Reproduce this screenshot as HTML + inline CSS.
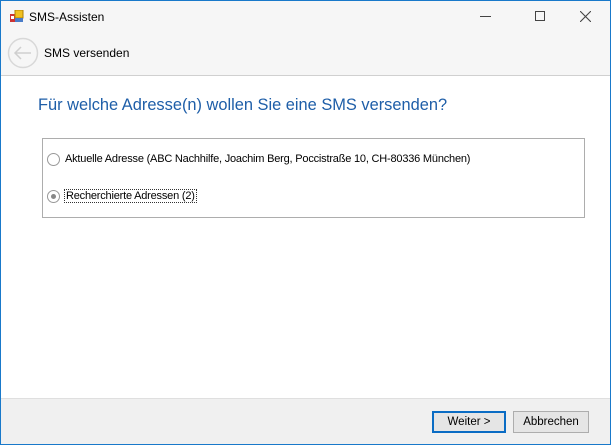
<!DOCTYPE html>
<html><head><style>
*{margin:0;padding:0;box-sizing:border-box}
body{width:611px;height:445px;overflow:hidden;font-family:"Liberation Sans",sans-serif;font-size:11px;color:#000;background:#fff;position:relative}
.win{position:absolute;left:0;top:0;width:611px;height:445px;border:1px solid #1979ca;}
.top{position:absolute;left:0;top:0;width:609px;height:75px;background:#f6f6f6;border-bottom:1px solid #d0d0d0}
.foot{position:absolute;left:0;top:397px;width:609px;height:46px;background:#f0f0f0;border-top:1px solid #dfdfdf}
.abs{position:absolute;white-space:nowrap}
.btn{position:absolute;height:22px;background:#e5e5e5;border:1px solid #adadad;text-align:center;line-height:20px;font-size:11.5px}
.radio{position:absolute;width:13px;height:13px;border:1px solid #999;border-radius:50%;background:#fff}
</style></head><body>
<div class="win">
<div class="top"></div>
<svg class="abs" style="left:9px;top:9px" width="14" height="13"><rect x="0" y="4" width="5" height="8" fill="#c33"/><rect x="1" y="6" width="3" height="3" fill="#fff"/><rect x="5" y="0" width="8" height="8" fill="#f0c020" stroke="#b08000"/><rect x="5" y="8" width="8" height="4" fill="#4a7cc8"/></svg>
<div class="abs" style="left:28px;top:9px;font-size:12px">SMS-Assisten</div>
<div class="abs" style="left:479px;top:15px;width:11px;height:1px;background:#444"></div>
<div class="abs" style="left:534px;top:10px;width:10px;height:10px;border:1px solid #444"></div>
<svg class="abs" style="left:579px;top:10px" width="11" height="11"><path d="M0 0L11 11M11 0L0 11" stroke="#444" stroke-width="1.1"/></svg>
<svg class="abs" style="left:6px;top:36px" width="32" height="32"><circle cx="16" cy="16" r="14.5" fill="none" stroke="#d8d8d8" stroke-width="1.5"/><path d="M24 16H8M14 10L8 16L14 22" fill="none" stroke="#cfcfcf" stroke-width="1.5"/></svg>
<div class="abs" style="left:43px;top:45px;font-size:12px">SMS versenden</div>
<div class="abs" style="left:37px;top:95px;font-size:16.4px;color:#1e5ea8">Für welche Adresse(n) wollen Sie eine SMS versenden?</div>
<div class="abs" style="left:41px;top:137px;width:543px;height:80px;border:1px solid #adadad"></div>
<div class="radio" style="left:46px;top:152px"></div>
<div class="abs" style="left:64px;top:152px;letter-spacing:-0.2px">Aktuelle Adresse (ABC Nachhilfe, Joachim Berg, Poccistraße 10, CH-80336 München)</div>
<div class="radio" style="left:46px;top:189px"><div style="position:absolute;left:3px;top:3px;width:5px;height:5px;border-radius:50%;background:#888"></div></div>
<div class="abs" style="left:63px;top:188px;border:1px dotted #333;padding:0 1px;letter-spacing:-0.2px">Recherchierte Adressen (2)</div>
<div class="foot"></div>
<div class="btn" style="left:431px;top:410px;width:74px;border:2px solid #0a6cc4;line-height:18px">Weiter &gt;</div>
<div class="btn" style="left:512px;top:410px;width:76px">Abbrechen</div>
</div>
</body></html>
